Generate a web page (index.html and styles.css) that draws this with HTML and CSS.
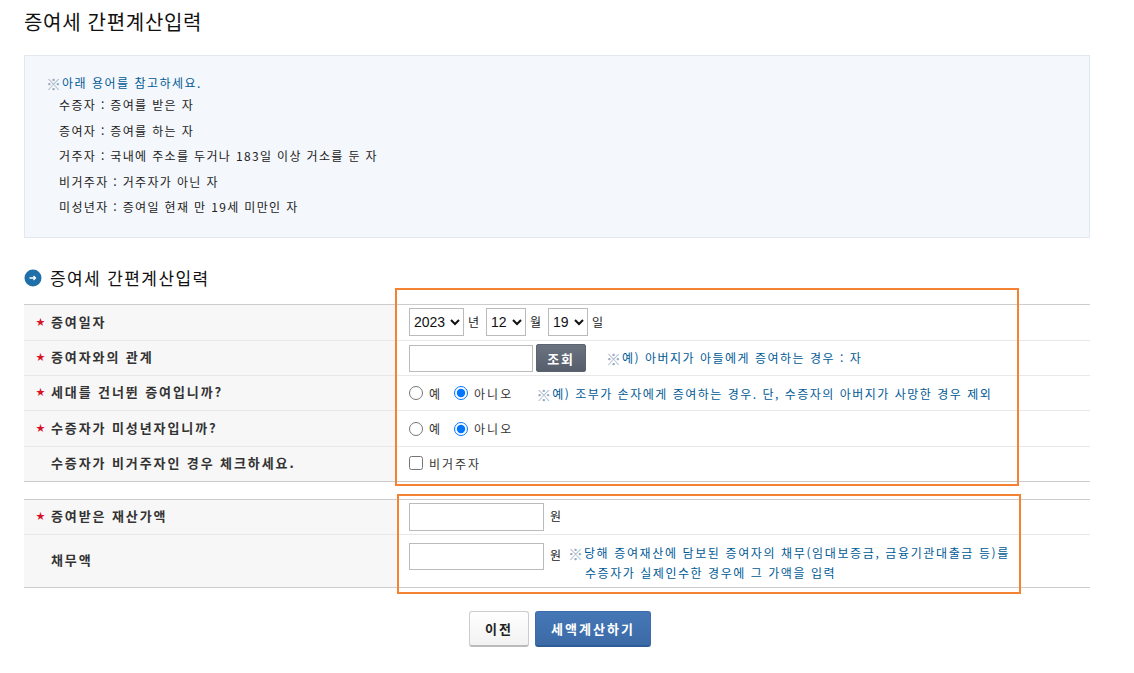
FILE: index.html
```html
<!DOCTYPE html>
<html lang="ko">
<head>
<meta charset="utf-8">
<title>증여세 간편계산입력</title>
<link rel="stylesheet" href="styles.css">
</head>
<body>
<main class="page">
  <h1 class="title">증여세 간편계산입력</h1>
  <section class="info">
    <p class="info-head"><span class="mark">※</span>아래 용어를 참고하세요.</p>
    <ul class="terms">
      <li>수증자 : 증여를 받은 자</li>
      <li>증여자 : 증여를 하는 자</li>
      <li>거주자 : 국내에 주소를 두거나 183일 이상 거소를 둔 자</li>
      <li>비거주자 : 거주자가 아닌 자</li>
      <li>미성년자 : 증여일 현재 만 19세 미만인 자</li>
    </ul>
  </section>
  <h2 class="section-title">
    <svg class="bullet" width="18" height="18" viewBox="0 0 18 18" aria-hidden="true"><circle cx="9" cy="9" r="8.500" fill="#1f6fa8"/><path d="M5.500 9h6M9.500 7 11.500 9l-2 2" fill="none" stroke="#fff" stroke-width="1.300"/></svg>
    증여세 간편계산입력
  </h2>
  <div class="form-a">
    <div class="row r36">
      <div class="label"><i class="star">★</i>증여일자</div>
      <div class="field">
        <select class="sel y"><option>2023</option></select><span class="unit">년</span>
        <select class="sel m"><option>12</option></select><span class="unit">월</span>
        <select class="sel m"><option>19</option></select><span class="unit">일</span>
      </div>
    </div>
    <div class="row r35">
      <div class="label"><i class="star">★</i>증여자와의 관계</div>
      <div class="field">
        <input class="txt rel" type="text"><button class="look" type="button">조회</button>
        <span class="note n1"><span class="mark">※</span>예) 아버지가 아들에게 증여하는 경우 : 자</span>
      </div>
    </div>
    <div class="row r35">
      <div class="label"><i class="star">★</i>세대를 건너뛴 증여입니까?</div>
      <div class="field">
        <label class="opt"><input type="radio" name="a">예</label>
        <label class="opt"><input type="radio" name="a" checked>아니오</label>
        <span class="note n2"><span class="mark">※</span>예) 조부가 손자에게 증여하는 경우. 단, 수증자의 아버지가 사망한 경우 제외</span>
      </div>
    </div>
    <div class="row r36">
      <div class="label"><i class="star">★</i>수증자가 미성년자입니까?</div>
      <div class="field">
        <label class="opt"><input type="radio" name="b">예</label>
        <label class="opt"><input type="radio" name="b" checked>아니오</label>
      </div>
    </div>
    <div class="row r35 last">
      <div class="label plain">수증자가 비거주자인 경우 체크하세요.</div>
      <div class="field check"><label class="opt"><input type="checkbox">비거주자</label></div>
    </div>
  </div>
  <div class="form-b">
    <div class="row r35">
      <div class="label"><i class="star">★</i>증여받은 재산가액</div>
      <div class="field"><input class="txt amt" type="text"><span class="won">원</span></div>
    </div>
    <div class="row r53 last">
      <div class="label plain">채무액</div>
      <div class="field debt">
        <input class="txt amt" type="text"><span class="won">원</span>
        <p class="note n3"><span class="mark">※</span>당해 증여재산에 담보된 증여자의 채무(임대보증금, 금융기관대출금 등)를<br><span class="indent">수증자가 실제인수한 경우에 그 가액을 입력</span></p>
      </div>
    </div>
  </div>
  <div class="actions">
    <button class="btn prev" type="button">이전</button>
    <button class="btn next" type="button">세액계산하기</button>
  </div>
  <div class="hl hl-a"></div>
  <div class="hl hl-b"></div>
</main>
</body>
</html>
```
FILE: styles.css
```css
* { box-sizing: border-box; }
html, body { margin: 0; padding: 0; background: #fff; }
body { font-family: "Noto Sans CJK KR", "Liberation Sans", sans-serif; font-size: 12px; color: #222; overflow: hidden; height: 673px; }
.page { position: relative; width: 1090px; padding: 10px 0 0 24px; }
.title { margin: 0; font-size: 20px; font-weight: 400; line-height: 24px; height: 45px; color: #111; letter-spacing: 0.7px; }
.info { height: 183px; border: 1px solid #e3e8f0; background: #f4f7fb; padding: 17px 21px 0; color: #222; }
.info-head { margin: 0; height: 19px; line-height: 19px; color: #005b96; letter-spacing: 1.5px; }
.mark { display: inline-block; width: 16px; font-size: 15px; line-height: 12px; letter-spacing: 0; color: #94a9c2; vertical-align: -2px; }
.terms { list-style: none; margin: 0; padding: 0 0 0 13px; }
.terms li { line-height: 25.6px; letter-spacing: 1.35px; height: 25.6px; }
.section-title { display: flex; align-items: center; gap: 8px; margin: 0; height: 66px; padding-top: 13px; font-size: 17px; font-weight: 400; color: #111; letter-spacing: 1.4px; }
.bullet { flex: none; }
.form-a, .form-b { border-top: 1px solid #ccc; }
.form-b { margin-top: 17px; }
.row { display: flex; border-bottom: 1px solid #e8e8e8; }
.row.last { border-bottom: 1px solid #ccc; }
.r35 { height: 35px; }
.r36 { height: 36px; }
.r53 { height: 53px; }
.label { flex: none; width: 372px; background: #f7f7f7; display: flex; align-items: center; padding: 0 0 3px 12px; font-weight: 700; font-size: 13px; color: #333; letter-spacing: 1.9px; }
.label.plain { padding-left: 27px; }
.star { font-style: normal; font-size: 9px; color: #d8112a; width: 15px; flex: none; letter-spacing: 0; }
.field { flex: 1; display: flex; align-items: center; padding-left: 13px; letter-spacing: 0.9px; }
.sel { font-family: "Liberation Sans", sans-serif; font-size: 14px; height: 28px; margin-bottom: 2px; border: 1px solid #bbb; background: #fff; color: #111; padding: 0; border-radius: 0; letter-spacing: 0; }
.sel.y { width: 55px; }
.sel.m { width: 40px; }
.unit { margin: 0 6px 3px 4px; font-size: 12px; }
.txt { border: 1px solid #bbb; background: #fff; padding: 0 4px; border-radius: 0; }
.rel { width: 124px; height: 27px; }
.look { width: 50px; height: 28px; margin-left: 3px; border: 1px solid #5c6470; border-radius: 2px; background: linear-gradient(#6b7380, #565e6b); color: #fff; font: 700 13px "Noto Sans CJK KR", sans-serif; letter-spacing: 1.8px; padding: 0; }
.note { color: #005b96; letter-spacing: 1.5px; margin: 0; }
.n1 { margin: 0 0 2px 20px; }
.n2 { margin-left: 11px; }
.opt { display: inline-flex; align-items: center; gap: 6px; margin-right: 12px; color: #333; letter-spacing: 2px; }
.opt input { margin: 0; width: 14px; height: 14px; flex: none; }
.check { padding-bottom: 2px; }
.amt { width: 135px; height: 28px; }
.won { margin: 0 0 3px 6px; }
.debt { align-items: flex-start; padding-top: 8px; }
.debt .amt { height: 27px; }
.debt .won { margin: 3px 0 0 6px; }
.n3 { margin-left: 6px; line-height: 20px; letter-spacing: 1.62px; }
.indent { padding-left: 17px; letter-spacing: 1.55px; }
.actions { display: flex; justify-content: center; gap: 6px; margin-top: 23px; padding-left: 6px; }
.btn { height: 36px; padding: 0; font: 700 13px "Noto Sans CJK KR", sans-serif; letter-spacing: 2px; border-radius: 3px; }
.prev { width: 60px; color: #222; border: 1px solid #ccc; border-bottom: 2px solid #bbb; background: linear-gradient(#fff, #f2f2f2); }
.next { width: 116px; color: #fff; border: 1px solid #3c6cab; border-bottom: 2px solid #2d5c96; background: linear-gradient(#4677b6, #3b6aa6); }
.hl { position: absolute; border: 2px solid #f58232; }
.hl-a { left: 395px; top: 288px; width: 624px; height: 198px; }
.hl-b { left: 397px; top: 494px; width: 624px; height: 100px; }
```
